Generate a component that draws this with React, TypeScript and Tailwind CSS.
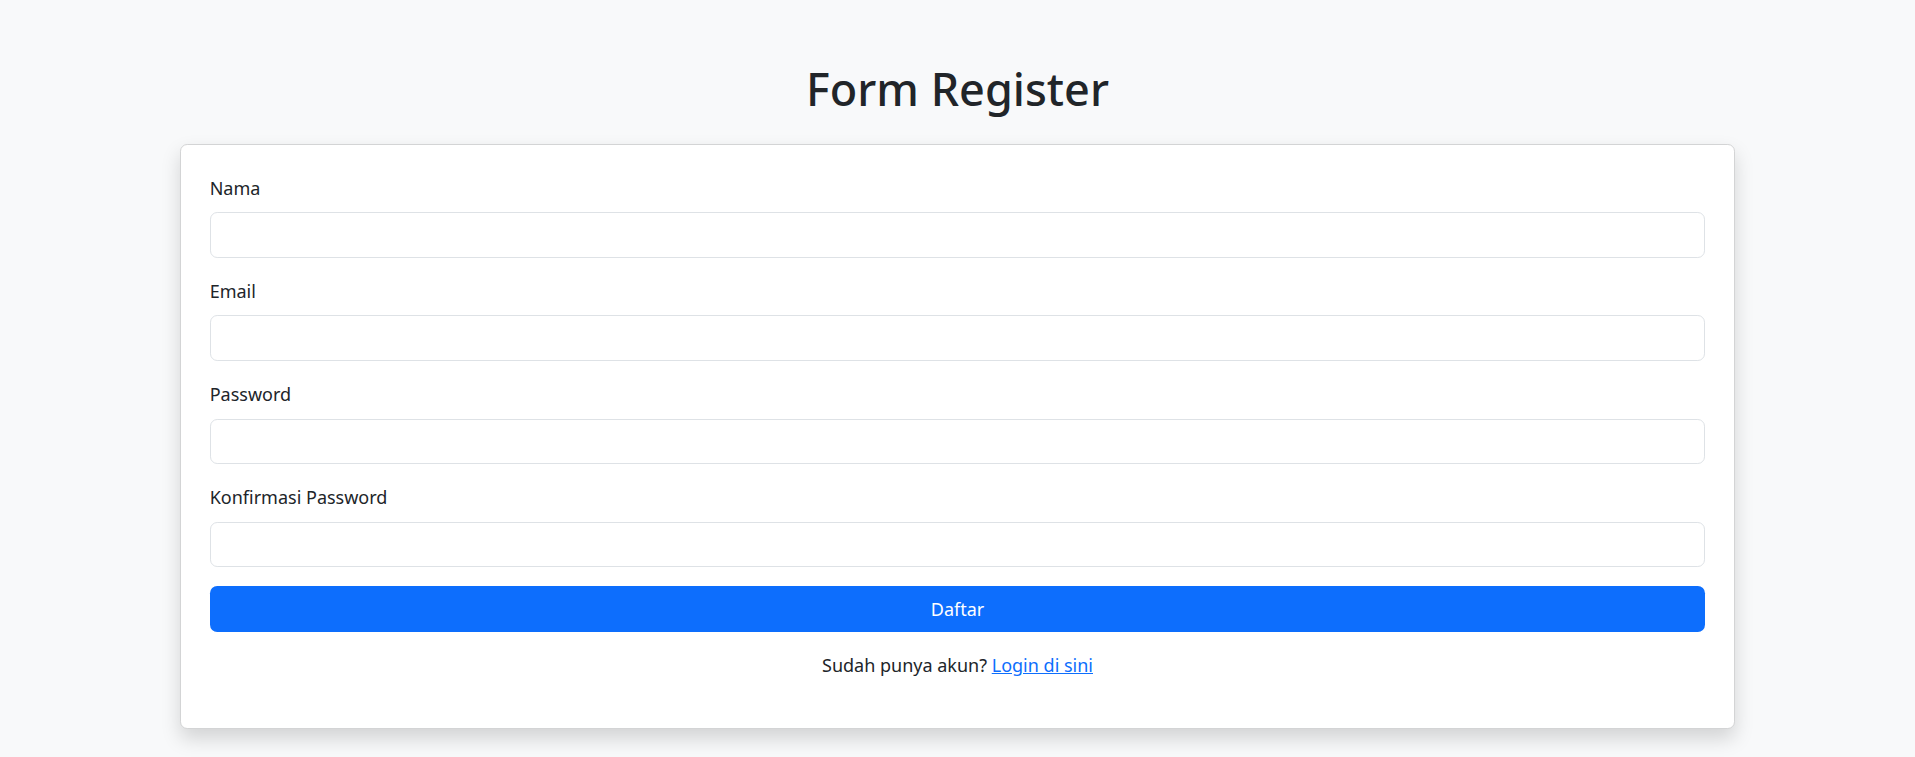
import React from "react";

const font = { fontFamily: '"Noto Sans", "Open Sans", "Liberation Sans", sans-serif' };

function Field({ label, type }: { label: string; type: string }) {
  return (
    <div className="mb-[19.2px]">
      <label className="block mb-[9.6px] text-[18px] leading-[28.8px] text-[#212529]">{label}</label>
      <input
        type={type}
        className="block w-full h-[45.6px] px-[14.4px] bg-white border border-[#dee2e6] rounded-[7.2px] text-[18px] text-[#212529] outline-none"
      />
    </div>
  );
}

export default function App() {
  return (
    <div className="min-h-screen bg-[#f8f9fa] text-[#212529]" style={font}>
      <div className="max-w-[1584px] mx-auto px-[14.4px] pt-[59.6px]">
        <h1 className="text-center text-[45px] leading-[57.6px] font-medium mb-[26.8px] text-[#212529]">
          Form Register
        </h1>
        <div className="bg-white border border-[#d3d4d5] rounded-[7.2px] shadow-[0_9.6px_19.2px_rgba(0,0,0,0.15)]">
          <div className="p-[28.8px]">
            <form onSubmit={(e) => e.preventDefault()}>
              <Field label="Nama" type="text" />
              <Field label="Email" type="email" />
              <Field label="Password" type="password" />
              <Field label="Konfirmasi Password" type="password" />
              <button
                type="submit"
                className="block w-full h-[45.6px] bg-[#0d6efd] text-white text-[18px] leading-[28.8px] rounded-[7.2px]"
              >
                Daftar
              </button>
            </form>
            <p className="mt-[19.2px] mb-[19.2px] text-center text-[18px] leading-[28.8px] text-[#212529]">
              Sudah punya akun?{" "}
              <a href="#" className="text-[#0d6efd] underline">
                Login di sini
              </a>
            </p>
          </div>
        </div>
      </div>
    </div>
  );
}
